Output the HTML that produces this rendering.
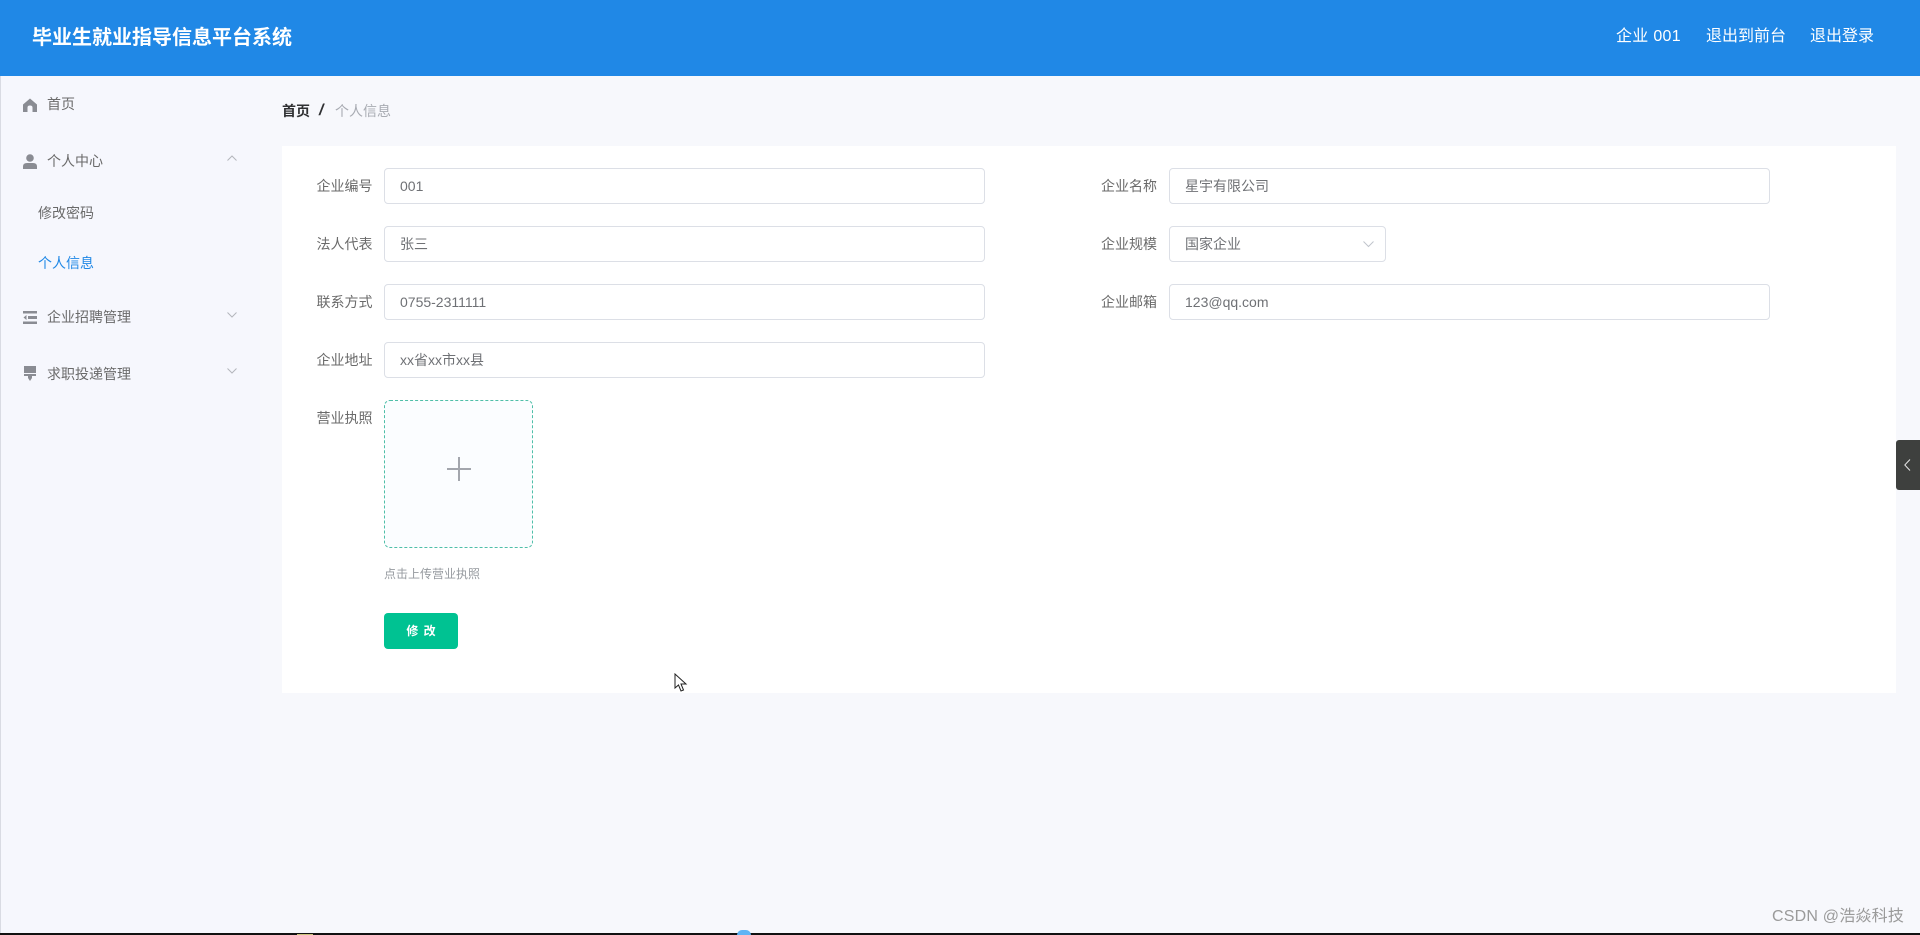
<!DOCTYPE html>
<html lang="zh"><head><meta charset="utf-8"><title>毕业生就业指导信息平台系统</title>
<style>
html,body{margin:0;padding:0;width:1920px;height:935px;overflow:hidden;background:#f7f8fc}
body{position:relative;font-family:"Liberation Sans","Noto Sans CJK SC",sans-serif;font-size:14px;color:#606266}
.a{position:absolute;white-space:nowrap}
.t{position:absolute;white-space:nowrap;height:20px;line-height:20px}
.inp{position:absolute;box-sizing:border-box;height:36px;background:#fff;border:1px solid #dcdfe6;border-radius:4px;padding:0 15px;line-height:34px;color:#6f7175;width:601px;left:384px}
.lb{position:absolute;white-space:nowrap;height:20px;line-height:20px;width:60px;text-align:right;color:#6a6a6a}
svg{position:absolute;display:block}
</style></head><body>
<div class="a" style="left:0;top:0;width:1px;height:935px;background:#d9dbe3"></div>
<div class="a" style="left:0;top:0;width:1920px;height:76px;background:#2088e6"></div>
<div class="t" style="left:32px;top:26px;height:24px;line-height:24px;font-size:20px;font-weight:bold;color:#fff">毕业生就业指导信息平台系统</div>
<div class="t" style="left:1616px;top:26px;height:22px;line-height:22px;font-size:16px;color:#fff;letter-spacing:.3px">企业 001</div>
<div class="t" style="left:1706px;top:26px;height:22px;line-height:22px;font-size:16px;color:#fff">退出到前台</div>
<div class="t" style="left:1810px;top:26px;height:22px;line-height:22px;font-size:16px;color:#fff">退出登录</div>

<!-- sidebar -->
<div class="a" style="left:1px;top:76px;width:259px;height:857px;background:#f6f7fd"></div>
<svg style="left:23px;top:98px" width="14" height="14" viewBox="0 0 14 14"><path d="M7 0.5 L14 6.5 V14 H9.5 V9.5 Q9.5 7.5 7 7.5 Q4.5 7.5 4.5 9.5 V14 H0 V6.5 Z" fill="#8a8c93"/></svg>
<div class="t" style="left:47px;top:94px;color:#6a6a6a">首页</div>
<svg style="left:23px;top:154px" width="14" height="15" viewBox="0 0 14 15"><circle cx="7" cy="4" r="3.8" fill="#8a8c93"/><path d="M0 15 V12.5 Q0 9 4 9 H10 Q14 9 14 12.5 V15 Z" fill="#8a8c93"/></svg>
<div class="t" style="left:47px;top:151px;color:#6a6a6a">个人中心</div>
<svg style="left:227px;top:155px" width="10" height="6" viewBox="0 0 10 6"><path d="M0.5 5.5 L5 1 L9.5 5.5" fill="none" stroke="#b4b6bc" stroke-width="1"/></svg>
<div class="t" style="left:38px;top:203px;color:#6a6a6a">修改密码</div>
<div class="t" style="left:38px;top:253px;color:#2088e6">个人信息</div>
<svg style="left:23px;top:311px" width="14" height="13" viewBox="0 0 14 13"><path d="M0 0 H14 V2.5 H0 Z M5 5 H14 V8 H5 Z M0 10.5 H14 V13 H0 Z M3.5 4 V9 L0.5 6.5 Z" fill="#8a8c93"/></svg>
<div class="t" style="left:47px;top:307px;color:#6a6a6a">企业招聘管理</div>
<svg style="left:227px;top:312px" width="10" height="6" viewBox="0 0 10 6"><path d="M0.5 0.5 L5 5 L9.5 0.5" fill="none" stroke="#b4b6bc" stroke-width="1"/></svg>
<svg style="left:24px;top:366px" width="12" height="15" viewBox="0 0 12 15"><path d="M0 0 H12 V7 H0 Z M0 8 H12 V10 H8 V12 L6 15 L4 12 V10 H0 Z" fill="#8a8c93"/></svg>
<div class="t" style="left:47px;top:363.500px;color:#6a6a6a">求职投递管理</div>
<svg style="left:227px;top:368px" width="10" height="6" viewBox="0 0 10 6"><path d="M0.5 0.5 L5 5 L9.5 0.5" fill="none" stroke="#b4b6bc" stroke-width="1"/></svg>

<!-- breadcrumb -->
<div class="t" style="left:282px;top:101px;font-weight:bold;color:#303133">首页</div>
<div class="t" style="left:319px;top:101px;font-weight:bold;font-style:italic;font-size:16px;color:#303133">/</div>
<div class="t" style="left:335px;top:101px;color:#a8abb2">个人信息</div>

<!-- card -->
<div class="a" style="left:282px;top:146px;width:1614px;height:547px;background:#fff"></div>

<div class="lb" style="left:312.500px;top:176px">企业编号</div>
<div class="inp" style="top:168px">001</div>
<div class="lb" style="left:312.500px;top:234px">法人代表</div>
<div class="inp" style="top:226px">张三</div>
<div class="lb" style="left:312.500px;top:292px">联系方式</div>
<div class="inp" style="top:284px">0755-2311111</div>
<div class="lb" style="left:312.500px;top:350px">企业地址</div>
<div class="inp" style="top:342px">xx省xx市xx县</div>

<div class="lb" style="left:1097px;top:176px">企业名称</div>
<div class="inp" style="left:1169px;top:168px">星宇有限公司</div>
<div class="lb" style="left:1097px;top:234px">企业规模</div>
<div class="inp" style="left:1169px;top:226px;width:217px">国家企业</div>
<svg style="left:1363px;top:241px" width="11" height="7" viewBox="0 0 11 7"><path d="M0.5 0.5 L5.5 5.5 L10.5 0.5" fill="none" stroke="#c0c4cc" stroke-width="1"/></svg>
<div class="lb" style="left:1097px;top:292px">企业邮箱</div>
<div class="inp" style="left:1169px;top:284px">123@qq.com</div>

<div class="lb" style="left:312.500px;top:408px">营业执照</div>
<div class="a" style="left:384px;top:400px;width:149px;height:148px;box-sizing:border-box;border:1.5px dashed #4fbfa8;border-radius:6px;background:#fbfdff"></div>
<div class="a" style="left:447px;top:468px;width:24px;height:1.5px;background:#a3a6ad"></div>
<div class="a" style="left:458px;top:457px;width:1.5px;height:24px;background:#a3a6ad"></div>
<div class="t" style="left:384px;top:565px;height:18px;line-height:18px;font-size:12px;color:#969a9f">点击上传营业执照</div>
<div class="a" style="left:384px;top:613px;width:74px;height:36px;background:#00c292;border-radius:4px;color:#fff;font-size:12px;font-weight:bold;line-height:36px;text-align:center;word-spacing:2px">修 改</div>

<!-- cursor -->
<svg style="left:674px;top:673px" width="14" height="20" viewBox="0 0 14 20"><path d="M1 1 V15 L4.5 12 L7 18 L9.5 17 L7 11 H12 Z" fill="#fff" stroke="#222" stroke-width="1"/></svg>

<!-- right tab -->
<div class="a" style="left:1896px;top:440px;width:24px;height:50px;background:#3e403e;border-radius:3px 0 0 3px"></div>
<svg style="left:1904px;top:459px" width="7" height="12" viewBox="0 0 7 12"><path d="M6 0.5 L0.8 6 L6 11.5" fill="none" stroke="#e4e4e4" stroke-width="1"/></svg>

<!-- watermark -->
<div class="t" style="left:1772px;top:907px;font-size:16px;color:#9a9a9a;letter-spacing:.2px">CSDN @浩焱科技</div>

<!-- bottom strip -->
<div class="a" style="left:0;top:933px;width:1920px;height:2px;background:#111"></div>
<div class="a" style="left:297px;top:934px;width:16px;height:1px;background:#c9c27a"></div>
<div class="a" style="left:737px;top:930px;width:14px;height:5px;border-radius:7px 7px 0 0;background:#5fb4f5"></div>
</body></html>
